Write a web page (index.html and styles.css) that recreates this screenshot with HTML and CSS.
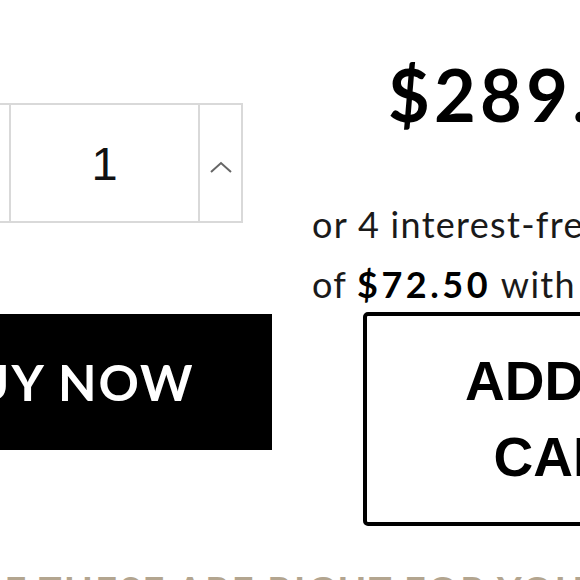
FILE: index.html
```html
<!DOCTYPE html>
<html lang="en">
<head>
<meta charset="utf-8">
<title>Product purchase</title>
<link rel="stylesheet" href="styles.css">
</head>
<body>
<main class="page">
  <section class="purchase">
    <div class="col-left">
      <div class="qty">
        <button class="qty-btn qty-minus" aria-label="Decrease quantity">
          <svg width="22" height="22" viewBox="0 0 22 22"><path d="M1 11 L11 20 L21 11" fill="none" stroke="#666" stroke-width="2"/></svg>
        </button>
        <div class="qty-value">1</div>
        <button class="qty-btn qty-plus" aria-label="Increase quantity">
          <svg width="22" height="22" viewBox="0 0 22 22"><path d="M1 20 L11 11 L21 20" fill="none" stroke="#666" stroke-width="2"/></svg>
        </button>
      </div>
      <button class="buy-now">BUY NOW</button>
    </div>
    <div class="col-right">
      <div class="price">$289.00</div>
      <p class="afterpay">or 4 interest-free payments<br>of <b>$72.50</b> with Afterpay</p>
      <button class="add-cart">ADD TO<br>CART</button>
    </div>
  </section>
  <h2 class="fit-heading"><span class="fit-inner">MAKE SURE THESE ARE RIGHT FOR YOU</span></h2>
</main>
</body>
</html>
```

FILE: styles.css
```css
html, body {
  margin: 0;
  padding: 0;
  width: 580px;
  height: 580px;
  overflow: hidden;
  background: #fff;
}

.page {
  width: 580px;
  height: 580px;
  overflow: hidden;
  font-family: "Lato", "Liberation Sans", sans-serif;
  color: #000;
}

.purchase {
  display: flex;
  gap: 40px;
  margin-left: -140px;
  width: 1000px;
}

.col-left {
  flex: 0 0 412px;
  display: flex;
  flex-direction: column;
  padding-top: 103px;
}

.qty {
  display: flex;
  box-sizing: border-box;
  height: 120px;
  margin-left: 106px;
  width: 277px;
  border: 2px solid #d9d9d9;
}

.qty-btn {
  flex: 0 0 43px;
  display: flex;
  align-items: center;
  justify-content: center;
  padding: 0;
  background: #fff;
  border: 0;
}

.qty-minus { border-right: 2px solid #d9d9d9; }
.qty-plus { border-left: 2px solid #d9d9d9; }

.qty-value {
  flex: 1 1 auto;
  display: flex;
  align-items: center;
  justify-content: center;
  font-family: "Liberation Sans", Arial, sans-serif;
  font-size: 47px;
  color: #111;
}

.buy-now {
  margin-top: 91px;
  height: 136px;
  width: 100%;
  background: #000;
  color: #fff;
  border: 0;
  padding: 0;
  font-family: "Lato", sans-serif;
  font-weight: 700;
  font-size: 50px;
  letter-spacing: 2px;
}

.col-right {
  flex: 0 0 480px;
  display: flex;
  flex-direction: column;
  padding-top: 58px;
}

.price {
  padding-left: 76px;
  font-size: 72px;
  line-height: 72px;
  font-weight: 700;
  letter-spacing: 4.3px;
  white-space: nowrap;
}

.afterpay {
  margin: 64px 0 0;
  font-size: 36px;
  line-height: 60px;
  letter-spacing: 1.3px;
  color: #1a1a1a;
  white-space: nowrap;
}

.afterpay b {
  font-weight: 700;
  color: #000;
  letter-spacing: 3.5px;
}

.add-cart {
  margin: -2px 0 0 51px;
  box-sizing: border-box;
  width: 414px;
  height: 214px;
  border: 4.5px solid #000;
  border-radius: 5px;
  background: #fff;
  padding: 0;
  font-family: "Liberation Sans", Arial, sans-serif;
  font-weight: 700;
  font-size: 55px;
  line-height: 76px;
  color: #000;
}

.fit-heading {
  margin: 45px 0 0;
  font-size: 38px;
  line-height: 38px;
  font-weight: 700;
  letter-spacing: 2.2px;
  color: #b3a58f;
  white-space: nowrap;
}

.fit-inner {
  display: inline-block;
  margin-left: -206px;
}
```
